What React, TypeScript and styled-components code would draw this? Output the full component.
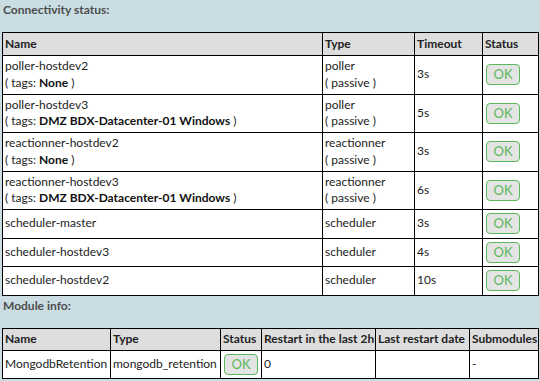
import React from "react";
import styled, { createGlobalStyle } from "styled-components";

const GlobalStyle = createGlobalStyle`
  html, body {
    margin: 0;
    padding: 0;
    background: #c9dde2;
  }
  body {
    font-family: Lato, "Open Sans", sans-serif;
    font-size: 12px;
    color: #222;
  }
`;

type Daemon = {
  name: string;
  tags?: string;
  type: string;
  passive?: boolean;
  timeout: string;
};

const daemons: Daemon[] = [
  { name: "poller-hostdev2", tags: "None", type: "poller", passive: true, timeout: "3s" },
  { name: "poller-hostdev3", tags: "DMZ BDX-Datacenter-01 Windows", type: "poller", passive: true, timeout: "5s" },
  { name: "reactionner-hostdev2", tags: "None", type: "reactionner", passive: true, timeout: "3s" },
  { name: "reactionner-hostdev3", tags: "DMZ BDX-Datacenter-01 Windows", type: "reactionner", passive: true, timeout: "6s" },
  { name: "scheduler-master", type: "scheduler", timeout: "3s" },
  { name: "scheduler-hostdev3", type: "scheduler", timeout: "4s" },
  { name: "scheduler-hostdev2", type: "scheduler", timeout: "10s" },
];

const OkButton = () => <StatusButton type="button">OK</StatusButton>;

const App = () => {
  return (
    <Page>
      <GlobalStyle />
      <SectionTitle>Connectivity status:</SectionTitle>
      <Table>
        <colgroup>
          <col style={{ width: 320 }} />
          <col style={{ width: 92 }} />
          <col style={{ width: 68 }} />
          <col />
        </colgroup>
        <thead>
          <tr>
            <HeadCell>Name</HeadCell>
            <HeadCell>Type</HeadCell>
            <HeadCell>Timeout</HeadCell>
            <HeadCell>Status</HeadCell>
          </tr>
        </thead>
        <tbody>
          {daemons.map((d) => (
            <tr key={d.name}>
              <Cell>
                {d.name}
                {d.tags && (
                  <SubLine>
                    ( tags: <Strong>{d.tags}</Strong> )
                  </SubLine>
                )}
              </Cell>
              <Cell>
                {d.type}
                {d.passive && <SubLine>( passive )</SubLine>}
              </Cell>
              <Cell>{d.timeout}</Cell>
              <Cell $button>
                <OkButton />
              </Cell>
            </tr>
          ))}
        </tbody>
      </Table>

      <SectionTitle $spaced>Module info:</SectionTitle>
      <Table>
        <colgroup>
          <col style={{ width: 108 }} />
          <col style={{ width: 110 }} />
          <col style={{ width: 41 }} />
          <col style={{ width: 114 }} />
          <col style={{ width: 94 }} />
          <col />
        </colgroup>
        <thead>
          <tr>
            <HeadCell $compact>Name</HeadCell>
            <HeadCell $compact>Type</HeadCell>
            <HeadCell $compact>Status</HeadCell>
            <HeadCell $compact>Restart in the last 2h</HeadCell>
            <HeadCell $compact>Last restart date</HeadCell>
            <HeadCell $compact>Submodules</HeadCell>
          </tr>
        </thead>
        <tbody>
          <tr>
            <Cell>MongodbRetention</Cell>
            <Cell>mongodb_retention</Cell>
            <Cell $button>
              <OkButton />
            </Cell>
            <Cell>0</Cell>
            <Cell></Cell>
            <Cell>-</Cell>
          </tr>
        </tbody>
      </Table>
    </Page>
  );
};

export default App;

const Page = styled.div`
  padding: 0 1px 0 2px;
`;

const SectionTitle = styled.div<{ $spaced?: boolean }>`
  font-weight: 700;
  color: #4d4d4d;
  line-height: 17px;
  padding: 1px 0 0 1px;
  margin-bottom: ${({ $spaced }) => ($spaced ? "14px" : "14px")};
`;

const Table = styled.table`
  width: 100%;
  table-layout: fixed;
  border-collapse: collapse;
  background: #fff;
  border: 1px solid #000;
`;

const HeadCell = styled.th<{ $compact?: boolean }>`
  background: #dddddd;
  border: 1px solid #000;
  font-weight: 700;
  text-align: left;
  line-height: 16px;
  padding: ${({ $compact }) => ($compact ? "2.5px 2px" : "3px 2px")};
  white-space: nowrap;
  overflow: hidden;
`;

const Cell = styled.td<{ $button?: boolean }>`
  border: 1px solid #000;
  line-height: 16.75px;
  padding: 2px 2px;
  vertical-align: middle;
  white-space: nowrap;
  padding-left: ${({ $button }) => ($button ? "3px" : "2px")};
`;

const SubLine = styled.div``;

const Strong = styled.b`
  font-weight: 700;
  color: #111;
`;

const StatusButton = styled.button`
  display: block;
  width: 34px;
  height: 21px;
  margin: 1.25px 0;
  padding: 0;
  border: 1px solid #5cb85c;
  border-radius: 4px;
  background: #e4e4e4;
  color: #5cb85c;
  font-family: Lato, "Open Sans", sans-serif;
  font-size: 13px;
  line-height: 19px;
  text-align: center;
`;
